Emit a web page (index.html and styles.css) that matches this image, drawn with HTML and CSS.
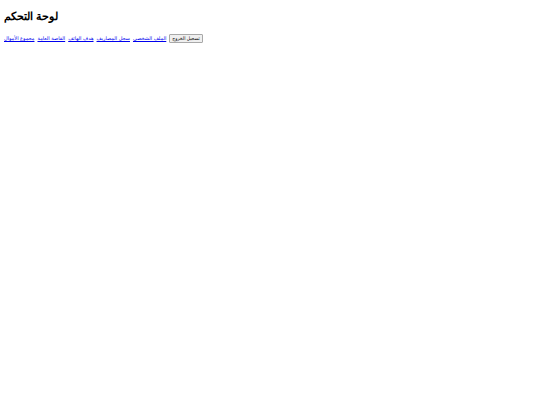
FILE: index.html
```
<!DOCTYPE html>
<html lang="ar">
<head>
  <meta charset="UTF-8">
  <meta name="viewport" content="width=device-width, initial-scale=1.0">
  <title>لوحة التحكم</title>
  <link rel="stylesheet" href="styles.css">
</head>
<body>
  <h1 class="title">لوحة التحكم</h1>
  <div class="menu">
    <nav class="links">
      <a href="#profile">الملف الشخصي</a>
      <a href="#expenses">سجل المصاريف</a>
      <a href="#phone">هدف الهاتف</a>
      <a href="#vault">القاصة العامة</a>
      <a href="#total">مجموع الأموال</a>
    </nav>
    <button type="button" class="logout">تسجيل الخروج</button>
  </div>
</body>
</html>
```

FILE: styles.css
```
body {
  margin: 8px 4px;
  font-family: "DejaVu Sans", sans-serif;
  font-size: 5px;
  background-color: #fff;
}
.title {
  margin: 0 0 10px;
  font-family: "Liberation Serif", serif;
  font-size: 11px;
  line-height: 16px;
  font-weight: bold;
}
.menu {
  display: flex;
  align-items: center;
  gap: 3px;
  line-height: 7px;
}
.links {
  display: flex;
  flex-direction: row-reverse; /* first link sits on the right */
  gap: 3px;
}
.links a {
  color: #0000ee;
}
.logout {
  padding: 0 2px;
  border: 1px solid #a8a8a8;
  border-radius: 1px;
  background-color: #efefef;
  color: #000;
  font-family: "DejaVu Sans Condensed", sans-serif;
  font-size: 5px;
  line-height: 7px;
}
```
